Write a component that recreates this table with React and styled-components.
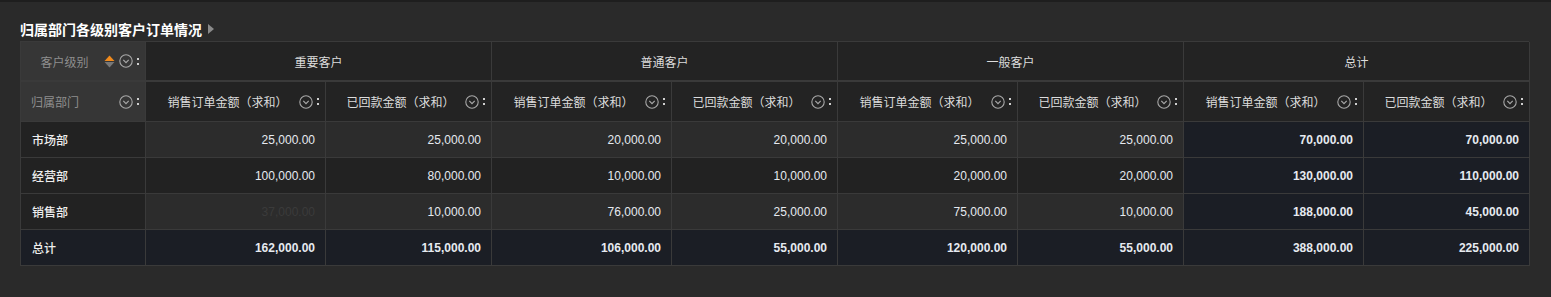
import React from 'react';
import styled, { createGlobalStyle } from 'styled-components';

const GlobalStyle = createGlobalStyle`
  html, body {
    margin: 0;
    padding: 0;
    background: #2a2a2a;
  }
  body {
    font-family: "Liberation Sans", "Noto Sans CJK SC", sans-serif;
  }
`;

const Page = styled.div`
  width: 1551px;
  height: 297px;
  box-sizing: border-box;
  border-top: 2px solid #1e1e1e;
  padding: 17px 22px 0 20px;
  background: #2a2a2a;
`;

const Title = styled.div`
  display: flex;
  align-items: center;
  gap: 6px;
  height: 19px;
  margin-bottom: 3px;
  font-family: "Noto Sans CJK SC", sans-serif;
  font-size: 14px;
  font-weight: 700;
  color: #ffffff;
`;

const Caret = styled.span`
  width: 0;
  height: 0;
  border-top: 5px solid transparent;
  border-bottom: 5px solid transparent;
  border-left: 6px solid #8a8a8a;
`;

const Grid = styled.div`
  display: grid;
  grid-template-columns: 125px repeat(4, 180px 166px);
  grid-template-rows: 40px 40px repeat(4, 36px);
  width: 1509px;
  border-top: 1px solid #3a3a3a;
  border-left: 1px solid #3a3a3a;
  box-sizing: border-box;
`;

const Cell = styled.div`
  display: flex;
  align-items: center;
  box-sizing: border-box;
  border-right: 1px solid #3a3a3a;
  border-bottom: ${p => (p.$thick ? '2px' : '1px')} solid #3a3a3a;
  min-width: 0;
  overflow: hidden;
  white-space: nowrap;
  font-size: 12px;
`;

const Corner = styled(Cell)`
  background: #363636;
  color: #8e8e8e;
  padding: 0 6px 0 ${p => (p.$center ? '8px' : '10px')};
  font-family: "Noto Sans CJK SC", sans-serif;
`;

const CornerLabel = styled.span`
  flex: 1;
  text-align: ${p => (p.$center ? 'center' : 'left')};
`;

const GroupHead = styled(Cell)`
  grid-column: span 2;
  justify-content: center;
  background: #232323;
  color: #dcdcdc;
  font-family: "Noto Sans CJK SC", sans-serif;
`;

const MeasureHead = styled(Cell)`
  background: #232323;
  color: #dcdcdc;
  padding: 0 6px 0 14px;
  font-family: "Noto Sans CJK SC", sans-serif;
`;

const HeadLabel = styled.span`
  flex: 1;
  text-align: center;
`;

const RowHead = styled(Cell)`
  padding-left: 11px;
  background: ${p => (p.$total ? '#1b1e25' : '#222222')};
  color: #eeeeee;
  font-family: "Noto Sans CJK SC", sans-serif;
  font-weight: 500;
`;

const Value = styled(Cell)`
  justify-content: flex-end;
  padding-right: 10px;
  background: ${p => p.$bg};
  color: ${p => (p.$faded ? '#3b3b3b' : '#e6eaf0')};
  font-weight: ${p => (p.$bold ? 700 : 400)};
`;

const Icons = styled.span`
  display: flex;
  align-items: center;
  gap: 4px;
  margin-left: 4px;
`;

const Dots = styled.span`
  display: flex;
  flex-direction: column;
  gap: 3px;
  i {
    display: block;
    width: 2px;
    height: 2px;
    background: #cfcfcf;
  }
`;

const SortIcon = () => (
  <svg width="11" height="13" viewBox="0 0 11 13">
    <path d="M5.5 0.5 L10.5 6 H0.5 Z" fill="#f08a1c" />
    <path d="M5.5 12.5 L10.5 7 H0.5 Z" fill="#777777" />
  </svg>
);

const ChevronCircle = () => (
  <svg width="14" height="14" viewBox="0 0 14 14">
    <circle cx="7" cy="7" r="6.2" fill="none" stroke="#a8a8a8" strokeWidth="1.1" />
    <path d="M4.3 5.9 L7 8.6 L9.7 5.9" fill="none" stroke="#a8a8a8" strokeWidth="1.2" />
  </svg>
);

const Tools = ({ sort }) => (
  <Icons>
    {sort && <SortIcon />}
    <ChevronCircle />
    <Dots><i /><i /></Dots>
  </Icons>
);

const groups = ['重要客户', '普通客户', '一般客户', '总计'];
const measures = ['销售订单金额（求和）', '已回款金额（求和）'];

const rows = [
  { name: '市场部', values: ['25,000.00', '25,000.00', '20,000.00', '20,000.00', '25,000.00', '25,000.00', '70,000.00', '70,000.00'], bg: '#2c2c2c' },
  { name: '经营部', values: ['100,000.00', '80,000.00', '10,000.00', '10,000.00', '20,000.00', '20,000.00', '130,000.00', '110,000.00'], bg: '#222222' },
  { name: '销售部', values: ['37,000.00', '10,000.00', '76,000.00', '25,000.00', '75,000.00', '10,000.00', '188,000.00', '45,000.00'], bg: '#2c2c2c', faded: [0] },
  { name: '总计', values: ['162,000.00', '115,000.00', '106,000.00', '55,000.00', '120,000.00', '55,000.00', '388,000.00', '225,000.00'], total: true },
];

const totalBg = '#1b1e25';

export default function App() {
  return (
    <>
      <GlobalStyle />
      <Page>
        <Title>
          归属部门各级别客户订单情况
          <Caret />
        </Title>
        <Grid>
          <Corner $center $thick>
            <CornerLabel $center>客户级别</CornerLabel>
            <Tools sort />
          </Corner>
          {groups.map(g => (
            <GroupHead key={g} $thick>{g}</GroupHead>
          ))}

          <Corner>
            <CornerLabel>归属部门</CornerLabel>
            <Tools />
          </Corner>
          {groups.map(g =>
            measures.map(m => (
              <MeasureHead key={g + m}>
                <HeadLabel>{m}</HeadLabel>
                <Tools />
              </MeasureHead>
            ))
          )}

          {rows.map(r => (
            <React.Fragment key={r.name}>
              <RowHead $total={r.total}>{r.name}</RowHead>
              {r.values.map((v, i) => {
                const isTotalCol = i >= 6;
                return (
                  <Value
                    key={i}
                    $bg={r.total || isTotalCol ? totalBg : r.bg}
                    $bold={r.total || isTotalCol}
                    $faded={r.faded && r.faded.includes(i)}
                  >
                    {v}
                  </Value>
                );
              })}
            </React.Fragment>
          ))}
        </Grid>
      </Page>
    </>
  );
}
